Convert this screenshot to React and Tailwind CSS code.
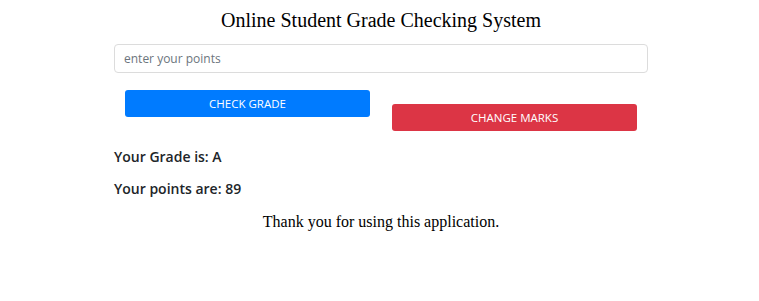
export default function App() {
  return (
    <div className="w-[759px] h-[301px] bg-white">
      <div className="w-[534px] ml-[114px] pt-[7px]">
        {/* Title */}
        <h1 className="text-center text-[20px] leading-[26px] text-black font-['Liberation_Serif',serif]">
          Online Student Grade Checking System
        </h1>

        {/* Input */}
        <input
          type="text"
          placeholder="enter your points"
          className="mt-[11px] block w-full h-[29px] px-[9px] text-[12px] border border-[#dcdcdc] rounded-[4px] placeholder:text-[#6c757d] font-['Open_Sans',sans-serif] outline-none"
        />

        {/* Buttons */}
        <div className="grid grid-cols-2 mt-[17px]">
          <div className="px-[11px]">
            <button className="w-full h-[27px] bg-[#007bff] text-white text-[11.5px] rounded-[3px] font-['Open_Sans',sans-serif]">
              CHECK GRADE
            </button>
          </div>
          <div className="px-[11px] pt-[14px]">
            <button className="w-full h-[27px] bg-[#dc3545] text-white text-[11.5px] rounded-[3px] font-['Open_Sans',sans-serif]">
              CHANGE MARKS
            </button>
          </div>
        </div>

        {/* Results */}
        <p className="mt-[16px] text-[14px] leading-[20px] font-semibold text-[#212529] font-['Open_Sans',sans-serif]">
          Your Grade is: A
        </p>
        <p className="mt-[12px] text-[14px] leading-[20px] font-semibold text-[#212529] font-['Open_Sans',sans-serif]">
          Your points are: 89
        </p>
        <p className="mt-[12px] text-center text-[16px] leading-[22px] text-black font-['Liberation_Serif',serif]">
          Thank you for using this application.
        </p>
      </div>
    </div>
  )
}
